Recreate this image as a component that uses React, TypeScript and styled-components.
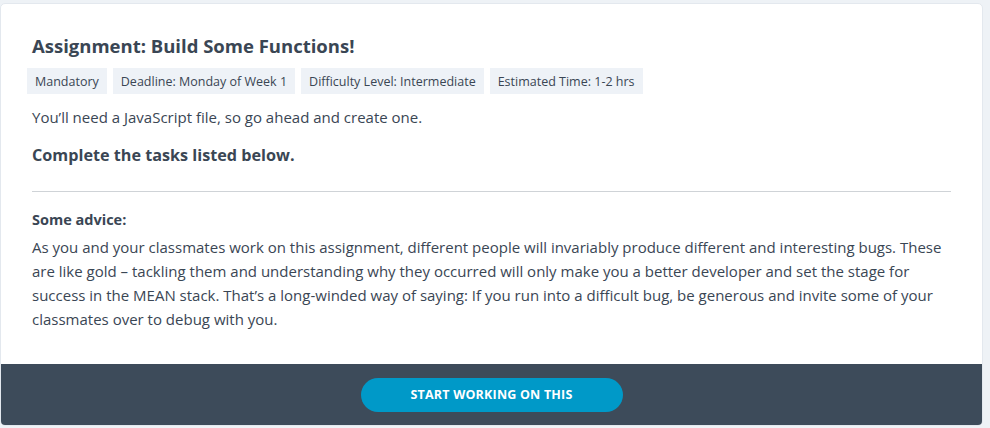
import React from "react";
import styled, { createGlobalStyle } from "styled-components";

const GlobalStyle = createGlobalStyle`
  html, body {
    margin: 0;
    padding: 0;
    background: #eef2f6;
  }
  body {
    font-family: "Open Sans", "Liberation Sans", sans-serif;
    color: #3a4654;
  }
`;

const Page = styled.div`
  padding: 3px 7px 3px 0;
`;

const Card = styled.section`
  background: #fff;
  border: 1px solid #e3e8ee;
  border-radius: 5px;
  overflow: hidden;
`;

const Body = styled.div`
  padding: 30px 31px 33px 31px;
`;

const Title = styled.h2`
  margin: 0 0 10px;
  font-size: 18.5px;
  font-weight: 700;
  line-height: 24px;
  color: #3a4654;
`;

const Tags = styled.div`
  display: flex;
  gap: 6px;
  margin-left: -5px;
`;

const Tag = styled.span`
  display: inline-flex;
  align-items: center;
  height: 26px;
  padding: 0 8px;
  background: #eef2f7;
  font-size: 12.5px;
  color: #3a4654;
`;

const Text = styled.p`
  margin: 11px 0 0;
  font-size: 15px;
  line-height: 24px;
`;

const Subhead = styled.h3`
  margin: 14px 0 0;
  font-size: 16.2px;
  font-weight: 700;
  line-height: 24px;
`;

const Rule = styled.hr`
  margin: 24px 0 0;
  border: 0;
  border-top: 1px solid #cfd3d7;
`;

const Label = styled.h4`
  margin: 16px 0 0;
  font-size: 14.5px;
  font-weight: 700;
  line-height: 24px;
`;

const Advice = styled.p`
  margin: 3px 0 0;
  font-size: 15px;
  line-height: 24px;
`;

const Footer = styled.div`
  background: #3d4b5a;
  height: 61px;
  display: flex;
  align-items: center;
  justify-content: center;
`;

const StartButton = styled.button`
  width: 262px;
  height: 34px;
  border: 0;
  border-radius: 17px;
  background: #0099c8;
  color: #fff;
  font-family: "Open Sans", "Liberation Sans", sans-serif;
  font-size: 12.5px;
  font-weight: 700;
  letter-spacing: 0.2px;
  text-transform: uppercase;
  cursor: pointer;
`;

const tags = [
  "Mandatory",
  "Deadline: Monday of Week 1",
  "Difficulty Level: Intermediate",
  "Estimated Time: 1-2 hrs",
];

export default function App() {
  return (
    <>
      <GlobalStyle />
      <Page>
        <Card>
          <Body>
            <Title>Assignment: Build Some Functions!</Title>
            <Tags>
              {tags.map((t) => (
                <Tag key={t}>{t}</Tag>
              ))}
            </Tags>
            <Text>You’ll need a JavaScript file, so go ahead and create one.</Text>
            <Subhead>Complete the tasks listed below.</Subhead>
            <Rule />
            <Label>Some advice:</Label>
            <Advice>
              As you and your classmates work on this assignment, different people will
              invariably produce different and interesting bugs. These are like gold –
              tackling them and understanding why they occurred will only make you a better
              developer and set the stage for success in the MEAN stack. That’s a
              long-winded way of saying: If you run into a difficult bug, be generous and
              invite some of your classmates over to debug with you.
            </Advice>
          </Body>
          <Footer>
            <StartButton>Start working on this</StartButton>
          </Footer>
        </Card>
      </Page>
    </>
  );
}
